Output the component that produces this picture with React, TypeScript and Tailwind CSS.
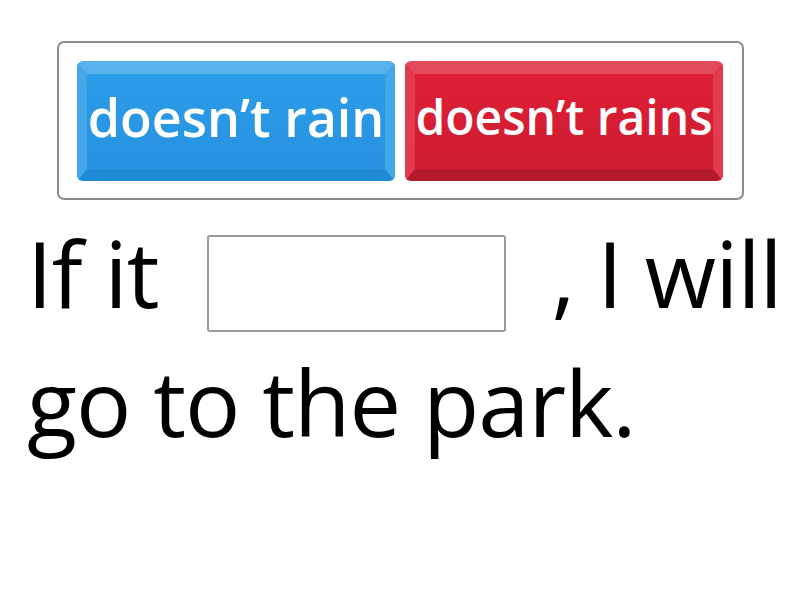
import React from "react";

function Btn({ label, color }: { label: string; color: "blue" | "red" }) {
  const blue = color === "blue";
  return (
    <div
      className={
        "flex h-[120px] w-[318px] items-center justify-center overflow-hidden rounded-[6px] border-t-[13px] border-x-[10px] border-b-[12px] " +
        (blue
          ? "border-t-[#58b2ec] border-x-[#42a8ea] border-b-[#1f8ad5] bg-gradient-to-b from-[#2d9de8] to-[#2692e0]"
          : "border-t-[#e44c5e] border-x-[#e23a4e] border-b-[#b31a2b] bg-gradient-to-b from-[#de1f36] to-[#cf1c30]")
      }
    >
      <span
        className={
          "mb-[9px] whitespace-nowrap font-['Open_Sans',sans-serif] font-semibold leading-none text-white " +
          (blue ? "text-[52px]" : "text-[48px]")
        }
      >
        {label}
      </span>
    </div>
  );
}

export default function App() {
  return (
    <div className="h-[600px] w-[800px] bg-white font-['Open_Sans',sans-serif]">
      <div className="pt-[41px] pl-[57px]">
        <div className="flex h-[159px] w-[687px] items-start gap-[10px] rounded-[7px] border-2 border-[#8c8c8c] pl-[18px] pt-[18px]">
          <Btn label="doesn’t rain" color="blue" />
          <Btn label="doesn’t rains" color="red" />
        </div>
      </div>
      <div className="pl-[27px] pt-[8px] text-[92px] leading-[129px] tracking-[-1px] text-black">
        <div className="flex items-start">
          <span>If it</span>
          <div className="ml-[48px] mt-[27px] h-[97px] w-[299px] rounded-[3px] border-2 border-[#9a9a9a]" />
          <span className="ml-[46px]">, I will</span>
        </div>
        <div>go to the park.</div>
      </div>
    </div>
  );
}
